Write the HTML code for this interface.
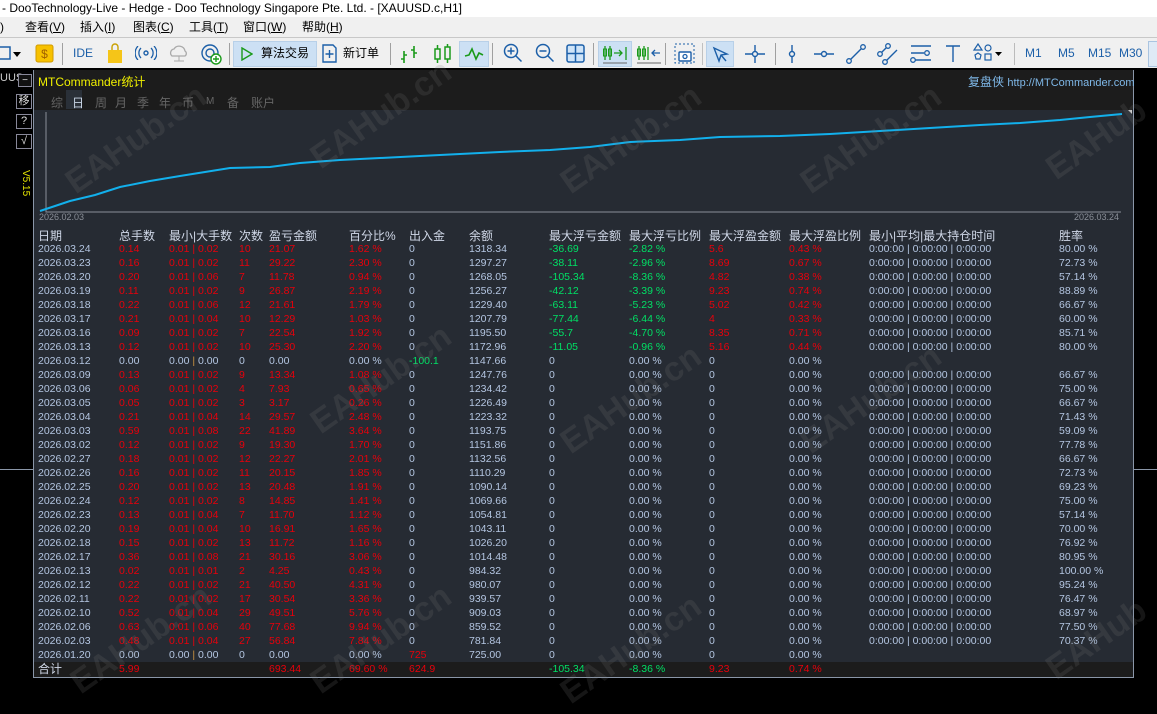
<!DOCTYPE html>
<html><head><meta charset="utf-8">
<style>
*{margin:0;padding:0;box-sizing:border-box}
body{width:1157px;height:714px;overflow:hidden;background:#000;font-family:"Liberation Sans","Noto Sans CJK SC",sans-serif;position:relative}
.abs{position:absolute}
#title{left:0;top:0;width:1157px;height:17px;background:#fff;font-size:12px;line-height:16px;color:#000;padding-left:2px;white-space:nowrap}
#menu{left:0;top:17px;width:1157px;height:20px;background:#f0f0f0;font-size:12px;line-height:20px;color:#000}
#menu span{position:absolute;top:0}
#tb{left:0;top:37px;width:1157px;height:31px;background:#f0f0f0;border-top:1px solid #c8c8c8}
.sep{position:absolute;top:5px;width:1px;height:22px;background:#a0a0a0}
.hl{position:absolute;top:3px;height:26px;background:#cce0f4;border:1px solid #b8d0e8}
.tbt{position:absolute;top:0;font-size:12px;line-height:31px;color:#000}
.tf{position:absolute;top:0;font-size:12px;line-height:31px;color:#1c5fa8}
#blackline{left:0;top:68px;width:1157px;height:2px;background:#000}
#panel{left:33px;top:70px;width:1101px;height:608px;background:#262b33;border-left:1px solid #8a96a8;border-right:1px solid #8a96a8;border-bottom:1px solid #8a96a8}
#ptop{left:34px;top:70px;width:1099px;height:40px;background:#1c1c1c}
.tab{position:absolute;top:94px;font-size:12px;color:#666}
.r{position:absolute;left:34px;width:1099px;height:14px;font-size:10.5px;line-height:14px;color:#b4c6e2;white-space:nowrap}
.r span{position:absolute;top:0}
.a{left:4px}.b{left:85px}.c{left:135px}.d{left:205px}.e{left:235px}.f{left:315px}.g{left:375px}.h{left:435px}.i{left:515px}.j{left:595px}.k{left:675px}.l{left:755px}.m{left:835px}.n{left:1025px}
.R{color:#e8000b}.G{color:#00e065}.s{color:#c89040}
.hd{font-size:12px;color:#d0d8e8}
.wm{position:absolute;font-size:34px;font-weight:bold;color:rgba(120,120,120,0.18);transform:rotate(-35deg);white-space:nowrap}
</style></head><body>
<div id="title" class="abs">- DooTechnology-Live - Hedge - Doo Technology Singapore Pte. Ltd. - [XAUUSD.c,H1]</div>
<div id="menu" class="abs">
<span style="left:0">)</span><span style="left:25px">查看(<u>V</u>)</span><span style="left:80px">插入(<u>I</u>)</span><span style="left:133px">图表(<u>C</u>)</span><span style="left:189px">工具(<u>T</u>)</span><span style="left:243px">窗口(<u>W</u>)</span><span style="left:302px">帮助(<u>H</u>)</span>
</div>
<div id="tb" class="abs">
<svg class="abs" style="left:0;top:6px" width="30" height="20"><rect x="-4" y="3" width="14" height="12" fill="none" stroke="#1c5fa8" stroke-width="1.5"/><path d="M13 8h8l-4 5z" fill="#000"/></svg>
<svg class="abs" style="left:35px;top:6px" width="20" height="20"><rect x="1" y="1" width="17" height="17" rx="2" fill="#f7c100" stroke="#d09a00"/><text x="9.5" y="14" font-size="12" text-anchor="middle" fill="#a06000" font-family="Liberation Sans">$</text></svg>
<div class="sep" style="left:62px"></div>
<div class="tf" style="left:73px">IDE</div>
<svg class="abs" style="left:106px;top:5px" width="18" height="21"><path d="M2 7h14v13H2z" fill="#f5c518"/><path d="M6 7V4a3 3 0 0 1 6 0v3" fill="none" stroke="#c9a000" stroke-width="1.4"/></svg>
<svg class="abs" style="left:135px;top:8px" width="22" height="14"><circle cx="11" cy="7" r="2" fill="none" stroke="#1c5fa8" stroke-width="1.4"/><path d="M6 2a7 7 0 0 0 0 10M16 2a7 7 0 0 1 0 10M3 0a10 10 0 0 0 0 14M19 0a10 10 0 0 1 0 14" fill="none" stroke="#1c5fa8" stroke-width="1.3"/></svg>
<svg class="abs" style="left:168px;top:6px" width="22" height="20"><path d="M4 12a4 4 0 0 1 2-7 6 6 0 0 1 11 2 3 3 0 0 1 0 5z" fill="none" stroke="#aaa" stroke-width="1.3"/><path d="M11 12v5M6 17h10" stroke="#aaa"/></svg>
<svg class="abs" style="left:200px;top:5px" width="24" height="22"><circle cx="10" cy="10" r="8" fill="none" stroke="#1c5fa8" stroke-width="1.4"/><circle cx="10" cy="10" r="4" fill="none" stroke="#1c5fa8" stroke-width="1.4"/><circle cx="16" cy="16" r="5" fill="#fff" stroke="#1a9a1a" stroke-width="1.4"/><path d="M16 13v6M13 16h6" stroke="#1a9a1a" stroke-width="1.4"/></svg>
<div class="sep" style="left:229px"></div>
<div class="hl" style="left:233px;width:84px"></div>
<svg class="abs" style="left:241px;top:9px" width="12" height="14"><path d="M1 1l10 6-10 6z" fill="none" stroke="#1a9a1a" stroke-width="1.4"/></svg>
<div class="tbt" style="left:261px">算法交易</div>
<svg class="abs" style="left:321px;top:6px" width="16" height="20"><path d="M2 1h10l3 3v14H2z" fill="none" stroke="#1c5fa8" stroke-width="1.4"/><path d="M8.5 6v8M4.5 10h8" stroke="#1c5fa8" stroke-width="1.4"/></svg>
<div class="tbt" style="left:343px">新订单</div>
<div class="sep" style="left:390px"></div>
<svg class="abs" style="left:400px;top:7px" width="20" height="18"><path d="M4 6v12M1 14h3M4 10h3M14 1v12M11 5h3M14 8h3" stroke="#1a9a1a" stroke-width="1.6" fill="none"/></svg>
<svg class="abs" style="left:433px;top:5px" width="20" height="22"><rect x="2" y="6" width="5" height="10" fill="none" stroke="#1a9a1a" stroke-width="1.5"/><rect x="12" y="4" width="5" height="12" fill="none" stroke="#1a9a1a" stroke-width="1.5"/><path d="M4.5 2v4M4.5 16v4M14.5 1v3M14.5 16v4" stroke="#1a9a1a" stroke-width="1.5"/></svg>
<div class="hl" style="left:459px;width:30px"></div>
<svg class="abs" style="left:464px;top:9px" width="20" height="14"><path d="M1 9l4-1 3-6 4 10 3-6 4 2" fill="none" stroke="#1a9a1a" stroke-width="1.6"/></svg>
<div class="sep" style="left:492px"></div>
<svg class="abs" style="left:503px;top:5px" width="20" height="22"><circle cx="8" cy="8" r="6.5" fill="none" stroke="#1c5fa8" stroke-width="1.5"/><path d="M12.5 12.5l6 6M8 4.5v7M4.5 8h7" stroke="#1c5fa8" stroke-width="1.5"/></svg>
<svg class="abs" style="left:535px;top:5px" width="20" height="22"><circle cx="8" cy="8" r="6.5" fill="none" stroke="#1c5fa8" stroke-width="1.5"/><path d="M12.5 12.5l6 6M4.5 8h7" stroke="#1c5fa8" stroke-width="1.5"/></svg>
<svg class="abs" style="left:566px;top:6px" width="20" height="20"><rect x="1" y="1" width="17" height="17" rx="2" fill="#cfe4f8" stroke="#1c5fa8" stroke-width="1.5"/><path d="M9.5 1v17M1 9.5h17" stroke="#1c5fa8" stroke-width="1.5"/></svg>
<div class="sep" style="left:593px"></div>
<div class="hl" style="left:598px;width:34px"></div>
<svg class="abs" style="left:602px;top:6px" width="28" height="20"><path d="M3 2v14M8 2v14" stroke="#1a9a1a" stroke-width="1.3"/><rect x="1.5" y="5" width="3" height="7" fill="none" stroke="#1a9a1a"/><rect x="6.5" y="5" width="3" height="7" fill="none" stroke="#1a9a1a"/><path d="M12 9h8M17 6l3 3-3 3M24 3v13" stroke="#1a9a1a" stroke-width="1.3" fill="none"/><path d="M1 19h24" stroke="#666"/></svg>
<svg class="abs" style="left:636px;top:6px" width="28" height="20"><path d="M3 2v14M8 2v14" stroke="#1a9a1a" stroke-width="1.3"/><rect x="1.5" y="5" width="3" height="7" fill="none" stroke="#1a9a1a"/><rect x="6.5" y="5" width="3" height="7" fill="none" stroke="#1a9a1a"/><path d="M12 3v13" stroke="#1a9a1a" stroke-width="1.3"/><path d="M24 9h-8M19 6l-3 3 3 3" stroke="#1c5fa8" stroke-width="1.3" fill="none"/><path d="M1 19h24" stroke="#666"/></svg>
<div class="sep" style="left:665px"></div>
<svg class="abs" style="left:674px;top:5px" width="22" height="22"><rect x="1" y="1" width="19" height="19" fill="none" stroke="#1c5fa8" stroke-dasharray="2 2"/><rect x="5" y="9" width="12" height="9" rx="1" fill="#fff" stroke="#1c5fa8" stroke-width="1.4"/><circle cx="11" cy="13.5" r="2" fill="none" stroke="#1c5fa8" stroke-width="1.3"/></svg>
<div class="sep" style="left:702px;background:#c0c0c0"></div>
<div class="hl" style="left:706px;width:28px"></div>
<svg class="abs" style="left:712px;top:8px" width="18" height="18"><path d="M2 2l13 6-6 1-2 6z" fill="none" stroke="#1c5fa8" stroke-width="1.4"/><path d="M9 9l5 6" stroke="#1c5fa8" stroke-width="1.4"/></svg>
<svg class="abs" style="left:744px;top:6px" width="22" height="20"><path d="M11 1v18M1 10h20" stroke="#1c5fa8" stroke-width="1.4"/><circle cx="11" cy="10" r="2.5" fill="#f0f0f0" stroke="#1c5fa8" stroke-width="1.4"/></svg>
<div class="sep" style="left:775px"></div>
<svg class="abs" style="left:786px;top:6px" width="12" height="20"><path d="M6 1v18" stroke="#1c5fa8" stroke-width="1.4"/><circle cx="6" cy="10" r="2.5" fill="#f0f0f0" stroke="#1c5fa8" stroke-width="1.4"/></svg>
<svg class="abs" style="left:813px;top:10px" width="22" height="12"><path d="M1 6h20" stroke="#1c5fa8" stroke-width="1.4"/><circle cx="11" cy="6" r="2.5" fill="#f0f0f0" stroke="#1c5fa8" stroke-width="1.4"/></svg>
<svg class="abs" style="left:845px;top:5px" width="22" height="22"><path d="M4 18L18 4" stroke="#1c5fa8" stroke-width="1.4"/><circle cx="4" cy="18" r="2.3" fill="#f0f0f0" stroke="#1c5fa8" stroke-width="1.3"/><circle cx="18" cy="4" r="2.3" fill="#f0f0f0" stroke="#1c5fa8" stroke-width="1.3"/></svg>
<svg class="abs" style="left:877px;top:5px" width="24" height="22"><path d="M3 11l8-8M8 19l12-12" stroke="#1c5fa8" stroke-width="1.4"/><circle cx="3" cy="11" r="2.3" fill="#f0f0f0" stroke="#1c5fa8" stroke-width="1.3"/><circle cx="11" cy="3" r="2.3" fill="#f0f0f0" stroke="#1c5fa8" stroke-width="1.3"/><circle cx="8" cy="19" r="2.3" fill="#f0f0f0" stroke="#1c5fa8" stroke-width="1.3"/></svg>
<svg class="abs" style="left:910px;top:6px" width="22" height="20"><path d="M1 2h20M1 9h13M1 16h20" stroke="#1c5fa8" stroke-width="1.4"/><circle cx="17" cy="9" r="2.3" fill="#f0f0f0" stroke="#1c5fa8" stroke-width="1.3"/><circle cx="3" cy="16" r="2.3" fill="#f0f0f0" stroke="#1c5fa8" stroke-width="1.3"/></svg>
<svg class="abs" style="left:945px;top:7px" width="16" height="18"><path d="M1 1h14M8 1v16" stroke="#1c5fa8" stroke-width="1.4"/></svg>
<svg class="abs" style="left:972px;top:5px" width="36" height="22"><path d="M6 1l4 6H2z" fill="none" stroke="#1c5fa8" stroke-width="1.2"/><circle cx="16" cy="5" r="3" fill="none" stroke="#1c5fa8" stroke-width="1.2"/><path d="M3 12l3-2 3 2-1 4H4z" fill="none" stroke="#1c5fa8" stroke-width="1.2"/><rect x="13" y="11" width="6" height="6" fill="none" stroke="#1c5fa8" stroke-width="1.2"/><path d="M23 9h7l-3.5 4z" fill="#000"/></svg>
<div class="sep" style="left:1014px;background:#bbb;width:1px"></div>
<div class="tf" style="left:1025px">M1</div><div class="tf" style="left:1058px">M5</div><div class="tf" style="left:1088px">M15</div><div class="tf" style="left:1119px">M30</div>
<div class="abs" style="left:1148px;top:3px;width:12px;height:26px;background:#dfeaf6;border:1px solid #aac4e0"></div>
</div>
<div id="blackline" class="abs"></div>

<!-- left strip -->
<div class="abs" style="left:0;top:72px;font-size:11px;color:#ccc">UUS</div>
<div class="abs" style="left:18px;top:74px;width:14px;height:13px;border:1px solid #889;background:#111;color:#ddd;font-size:10px;line-height:11px;text-align:center">−</div>
<div class="abs" style="left:16px;top:94px;width:16px;height:15px;border:1px solid #889;color:#ddd;font-size:11px;line-height:13px;text-align:center">移</div>
<div class="abs" style="left:16px;top:114px;width:16px;height:15px;border:1px solid #889;color:#ddd;font-size:11px;line-height:13px;text-align:center">?</div>
<div class="abs" style="left:16px;top:134px;width:16px;height:15px;border:1px solid #889;color:#ddd;font-size:11px;line-height:13px;text-align:center">√</div>
<div class="abs" style="left:15px;top:170px;font-size:10px;color:#e6e600;transform:rotate(90deg);transform-origin:left top;left:31px;white-space:nowrap">V5.15</div>
<div class="abs" style="left:0;top:469px;width:33px;height:1px;background:#8a96a8"></div>
<div class="abs" style="left:1134px;top:469px;width:23px;height:1px;background:#8a96a8"></div>

<div id="panel" class="abs"></div>
<div id="ptop" class="abs"></div>
<div class="abs" style="left:38px;top:73px;font-size:12px;color:#f0f000">MTCommander统计</div>
<div class="abs" style="left:968px;top:73px;font-size:12px;color:#7fb8e8">复盘侠 <span style="font-size:11px">http://MTCommander.com</span></div>
<div class="tab" style="left:51px">综</div>
<div class="abs" style="left:66px;top:90px;width:16px;height:19px;background:#2a3038"></div>
<div class="tab" style="left:72px;color:#c8d4e4">日</div>
<div class="tab" style="left:95px">周</div><div class="tab" style="left:115px">月</div><div class="tab" style="left:137px">季</div><div class="tab" style="left:159px">年</div><div class="tab" style="left:182px">币</div><div class="tab" style="left:206px;font-size:10px;top:96px">M</div><div class="tab" style="left:227px">备</div><div class="tab" style="left:251px">账户</div>

<svg class="abs" style="left:34px;top:110px" width="1099" height="115">
<path d="M12 2V102H1087" fill="none" stroke="#8a8f98" stroke-width="1"/>
<polyline fill="none" stroke="#12b0ec" stroke-width="2" points="6,101 36,91 61,85 86,77 116,71 146,66 171,62 196,58 236,57 266,53 306,50 346,48 386,46 426,44 466,42 516,40 556,37 596,32 646,30 686,27 746,26 796,24 846,21 896,18 946,15 986,13 1026,10 1056,7 1088,4"/>
<path d="M1094 0l4 -4v8z" fill="#ccc"/>
<text x="5" y="110" font-size="9" fill="#8a8f98" font-family="Liberation Sans">2026.02.03</text>
<text x="1040" y="110" font-size="9" fill="#8a8f98" font-family="Liberation Sans">2026.03.24</text>
</svg>

<div class="r hd" style="top:228px;height:16px;line-height:16px"><span class="a">日期</span><span class="b">总手数</span><span class="c">最小|大手数</span><span class="d">次数</span><span class="e">盈亏金额</span><span class="f">百分比%</span><span class="g">出入金</span><span class="h">余额</span><span class="i">最大浮亏金额</span><span class="j">最大浮亏比例</span><span class="k">最大浮盈金额</span><span class="l">最大浮盈比例</span><span class="m">最小|平均|最大持仓时间</span><span class="n">胜率</span></div>

<div class="r" style="top:242px"><span class="a">2026.03.24</span><span class="b R">0.14</span><span class="c R">0.01 | 0.02</span><span class="d R">10</span><span class="e R">21.07</span><span class="f R">1.62 %</span><span class="g">0</span><span class="h">1318.34</span><span class="i G">-36.69</span><span class="j G">-2.82 %</span><span class="k R">5.6</span><span class="l R">0.43 %</span><span class="m">0:00:00 | 0:00:00 | 0:00:00</span><span class="n">80.00 %</span></div>
<div class="r" style="top:256px"><span class="a">2026.03.23</span><span class="b R">0.16</span><span class="c R">0.01 | 0.02</span><span class="d R">11</span><span class="e R">29.22</span><span class="f R">2.30 %</span><span class="g">0</span><span class="h">1297.27</span><span class="i G">-38.11</span><span class="j G">-2.96 %</span><span class="k R">8.69</span><span class="l R">0.67 %</span><span class="m">0:00:00 | 0:00:00 | 0:00:00</span><span class="n">72.73 %</span></div>
<div class="r" style="top:270px"><span class="a">2026.03.20</span><span class="b R">0.20</span><span class="c R">0.01 | 0.06</span><span class="d R">7</span><span class="e R">11.78</span><span class="f R">0.94 %</span><span class="g">0</span><span class="h">1268.05</span><span class="i G">-105.34</span><span class="j G">-8.36 %</span><span class="k R">4.82</span><span class="l R">0.38 %</span><span class="m">0:00:00 | 0:00:00 | 0:00:00</span><span class="n">57.14 %</span></div>
<div class="r" style="top:284px"><span class="a">2026.03.19</span><span class="b R">0.11</span><span class="c R">0.01 | 0.02</span><span class="d R">9</span><span class="e R">26.87</span><span class="f R">2.19 %</span><span class="g">0</span><span class="h">1256.27</span><span class="i G">-42.12</span><span class="j G">-3.39 %</span><span class="k R">9.23</span><span class="l R">0.74 %</span><span class="m">0:00:00 | 0:00:00 | 0:00:00</span><span class="n">88.89 %</span></div>
<div class="r" style="top:298px"><span class="a">2026.03.18</span><span class="b R">0.22</span><span class="c R">0.01 | 0.06</span><span class="d R">12</span><span class="e R">21.61</span><span class="f R">1.79 %</span><span class="g">0</span><span class="h">1229.40</span><span class="i G">-63.11</span><span class="j G">-5.23 %</span><span class="k R">5.02</span><span class="l R">0.42 %</span><span class="m">0:00:00 | 0:00:00 | 0:00:00</span><span class="n">66.67 %</span></div>
<div class="r" style="top:312px"><span class="a">2026.03.17</span><span class="b R">0.21</span><span class="c R">0.01 | 0.04</span><span class="d R">10</span><span class="e R">12.29</span><span class="f R">1.03 %</span><span class="g">0</span><span class="h">1207.79</span><span class="i G">-77.44</span><span class="j G">-6.44 %</span><span class="k R">4</span><span class="l R">0.33 %</span><span class="m">0:00:00 | 0:00:00 | 0:00:00</span><span class="n">60.00 %</span></div>
<div class="r" style="top:326px"><span class="a">2026.03.16</span><span class="b R">0.09</span><span class="c R">0.01 | 0.02</span><span class="d R">7</span><span class="e R">22.54</span><span class="f R">1.92 %</span><span class="g">0</span><span class="h">1195.50</span><span class="i G">-55.7</span><span class="j G">-4.70 %</span><span class="k R">8.35</span><span class="l R">0.71 %</span><span class="m">0:00:00 | 0:00:00 | 0:00:00</span><span class="n">85.71 %</span></div>
<div class="r" style="top:340px"><span class="a">2026.03.13</span><span class="b R">0.12</span><span class="c R">0.01 | 0.02</span><span class="d R">10</span><span class="e R">25.30</span><span class="f R">2.20 %</span><span class="g">0</span><span class="h">1172.96</span><span class="i G">-11.05</span><span class="j G">-0.96 %</span><span class="k R">5.16</span><span class="l R">0.44 %</span><span class="m">0:00:00 | 0:00:00 | 0:00:00</span><span class="n">80.00 %</span></div>
<div class="r" style="top:354px"><span class="a">2026.03.12</span><span class="b">0.00</span><span class="c">0.00 <b class="s" style="font-weight:normal">|</b> 0.00</span><span class="d">0</span><span class="e">0.00</span><span class="f">0.00 %</span><span class="g G">-100.1</span><span class="h">1147.66</span><span class="i">0</span><span class="j">0.00 %</span><span class="k">0</span><span class="l">0.00 %</span></div>
<div class="r" style="top:368px"><span class="a">2026.03.09</span><span class="b R">0.13</span><span class="c R">0.01 | 0.02</span><span class="d R">9</span><span class="e R">13.34</span><span class="f R">1.08 %</span><span class="g">0</span><span class="h">1247.76</span><span class="i">0</span><span class="j">0.00 %</span><span class="k">0</span><span class="l">0.00 %</span><span class="m">0:00:00 | 0:00:00 | 0:00:00</span><span class="n">66.67 %</span></div>
<div class="r" style="top:382px"><span class="a">2026.03.06</span><span class="b R">0.06</span><span class="c R">0.01 | 0.02</span><span class="d R">4</span><span class="e R">7.93</span><span class="f R">0.65 %</span><span class="g">0</span><span class="h">1234.42</span><span class="i">0</span><span class="j">0.00 %</span><span class="k">0</span><span class="l">0.00 %</span><span class="m">0:00:00 | 0:00:00 | 0:00:00</span><span class="n">75.00 %</span></div>
<div class="r" style="top:396px"><span class="a">2026.03.05</span><span class="b R">0.05</span><span class="c R">0.01 | 0.02</span><span class="d R">3</span><span class="e R">3.17</span><span class="f R">0.26 %</span><span class="g">0</span><span class="h">1226.49</span><span class="i">0</span><span class="j">0.00 %</span><span class="k">0</span><span class="l">0.00 %</span><span class="m">0:00:00 | 0:00:00 | 0:00:00</span><span class="n">66.67 %</span></div>
<div class="r" style="top:410px"><span class="a">2026.03.04</span><span class="b R">0.21</span><span class="c R">0.01 | 0.04</span><span class="d R">14</span><span class="e R">29.57</span><span class="f R">2.48 %</span><span class="g">0</span><span class="h">1223.32</span><span class="i">0</span><span class="j">0.00 %</span><span class="k">0</span><span class="l">0.00 %</span><span class="m">0:00:00 | 0:00:00 | 0:00:00</span><span class="n">71.43 %</span></div>
<div class="r" style="top:424px"><span class="a">2026.03.03</span><span class="b R">0.59</span><span class="c R">0.01 | 0.08</span><span class="d R">22</span><span class="e R">41.89</span><span class="f R">3.64 %</span><span class="g">0</span><span class="h">1193.75</span><span class="i">0</span><span class="j">0.00 %</span><span class="k">0</span><span class="l">0.00 %</span><span class="m">0:00:00 | 0:00:00 | 0:00:00</span><span class="n">59.09 %</span></div>
<div class="r" style="top:438px"><span class="a">2026.03.02</span><span class="b R">0.12</span><span class="c R">0.01 | 0.02</span><span class="d R">9</span><span class="e R">19.30</span><span class="f R">1.70 %</span><span class="g">0</span><span class="h">1151.86</span><span class="i">0</span><span class="j">0.00 %</span><span class="k">0</span><span class="l">0.00 %</span><span class="m">0:00:00 | 0:00:00 | 0:00:00</span><span class="n">77.78 %</span></div>
<div class="r" style="top:452px"><span class="a">2026.02.27</span><span class="b R">0.18</span><span class="c R">0.01 | 0.02</span><span class="d R">12</span><span class="e R">22.27</span><span class="f R">2.01 %</span><span class="g">0</span><span class="h">1132.56</span><span class="i">0</span><span class="j">0.00 %</span><span class="k">0</span><span class="l">0.00 %</span><span class="m">0:00:00 | 0:00:00 | 0:00:00</span><span class="n">66.67 %</span></div>
<div class="r" style="top:466px"><span class="a">2026.02.26</span><span class="b R">0.16</span><span class="c R">0.01 | 0.02</span><span class="d R">11</span><span class="e R">20.15</span><span class="f R">1.85 %</span><span class="g">0</span><span class="h">1110.29</span><span class="i">0</span><span class="j">0.00 %</span><span class="k">0</span><span class="l">0.00 %</span><span class="m">0:00:00 | 0:00:00 | 0:00:00</span><span class="n">72.73 %</span></div>
<div class="r" style="top:480px"><span class="a">2026.02.25</span><span class="b R">0.20</span><span class="c R">0.01 | 0.02</span><span class="d R">13</span><span class="e R">20.48</span><span class="f R">1.91 %</span><span class="g">0</span><span class="h">1090.14</span><span class="i">0</span><span class="j">0.00 %</span><span class="k">0</span><span class="l">0.00 %</span><span class="m">0:00:00 | 0:00:00 | 0:00:00</span><span class="n">69.23 %</span></div>
<div class="r" style="top:494px"><span class="a">2026.02.24</span><span class="b R">0.12</span><span class="c R">0.01 | 0.02</span><span class="d R">8</span><span class="e R">14.85</span><span class="f R">1.41 %</span><span class="g">0</span><span class="h">1069.66</span><span class="i">0</span><span class="j">0.00 %</span><span class="k">0</span><span class="l">0.00 %</span><span class="m">0:00:00 | 0:00:00 | 0:00:00</span><span class="n">75.00 %</span></div>
<div class="r" style="top:508px"><span class="a">2026.02.23</span><span class="b R">0.13</span><span class="c R">0.01 | 0.04</span><span class="d R">7</span><span class="e R">11.70</span><span class="f R">1.12 %</span><span class="g">0</span><span class="h">1054.81</span><span class="i">0</span><span class="j">0.00 %</span><span class="k">0</span><span class="l">0.00 %</span><span class="m">0:00:00 | 0:00:00 | 0:00:00</span><span class="n">57.14 %</span></div>
<div class="r" style="top:522px"><span class="a">2026.02.20</span><span class="b R">0.19</span><span class="c R">0.01 | 0.04</span><span class="d R">10</span><span class="e R">16.91</span><span class="f R">1.65 %</span><span class="g">0</span><span class="h">1043.11</span><span class="i">0</span><span class="j">0.00 %</span><span class="k">0</span><span class="l">0.00 %</span><span class="m">0:00:00 | 0:00:00 | 0:00:00</span><span class="n">70.00 %</span></div>
<div class="r" style="top:536px"><span class="a">2026.02.18</span><span class="b R">0.15</span><span class="c R">0.01 | 0.02</span><span class="d R">13</span><span class="e R">11.72</span><span class="f R">1.16 %</span><span class="g">0</span><span class="h">1026.20</span><span class="i">0</span><span class="j">0.00 %</span><span class="k">0</span><span class="l">0.00 %</span><span class="m">0:00:00 | 0:00:00 | 0:00:00</span><span class="n">76.92 %</span></div>
<div class="r" style="top:550px"><span class="a">2026.02.17</span><span class="b R">0.36</span><span class="c R">0.01 | 0.08</span><span class="d R">21</span><span class="e R">30.16</span><span class="f R">3.06 %</span><span class="g">0</span><span class="h">1014.48</span><span class="i">0</span><span class="j">0.00 %</span><span class="k">0</span><span class="l">0.00 %</span><span class="m">0:00:00 | 0:00:00 | 0:00:00</span><span class="n">80.95 %</span></div>
<div class="r" style="top:564px"><span class="a">2026.02.13</span><span class="b R">0.02</span><span class="c R">0.01 | 0.01</span><span class="d R">2</span><span class="e R">4.25</span><span class="f R">0.43 %</span><span class="g">0</span><span class="h">984.32</span><span class="i">0</span><span class="j">0.00 %</span><span class="k">0</span><span class="l">0.00 %</span><span class="m">0:00:00 | 0:00:00 | 0:00:00</span><span class="n">100.00 %</span></div>
<div class="r" style="top:578px"><span class="a">2026.02.12</span><span class="b R">0.22</span><span class="c R">0.01 | 0.02</span><span class="d R">21</span><span class="e R">40.50</span><span class="f R">4.31 %</span><span class="g">0</span><span class="h">980.07</span><span class="i">0</span><span class="j">0.00 %</span><span class="k">0</span><span class="l">0.00 %</span><span class="m">0:00:00 | 0:00:00 | 0:00:00</span><span class="n">95.24 %</span></div>
<div class="r" style="top:592px"><span class="a">2026.02.11</span><span class="b R">0.22</span><span class="c R">0.01 | 0.02</span><span class="d R">17</span><span class="e R">30.54</span><span class="f R">3.36 %</span><span class="g">0</span><span class="h">939.57</span><span class="i">0</span><span class="j">0.00 %</span><span class="k">0</span><span class="l">0.00 %</span><span class="m">0:00:00 | 0:00:00 | 0:00:00</span><span class="n">76.47 %</span></div>
<div class="r" style="top:606px"><span class="a">2026.02.10</span><span class="b R">0.52</span><span class="c R">0.01 | 0.04</span><span class="d R">29</span><span class="e R">49.51</span><span class="f R">5.76 %</span><span class="g">0</span><span class="h">909.03</span><span class="i">0</span><span class="j">0.00 %</span><span class="k">0</span><span class="l">0.00 %</span><span class="m">0:00:00 | 0:00:00 | 0:00:00</span><span class="n">68.97 %</span></div>
<div class="r" style="top:620px"><span class="a">2026.02.06</span><span class="b R">0.63</span><span class="c R">0.01 | 0.06</span><span class="d R">40</span><span class="e R">77.68</span><span class="f R">9.94 %</span><span class="g">0</span><span class="h">859.52</span><span class="i">0</span><span class="j">0.00 %</span><span class="k">0</span><span class="l">0.00 %</span><span class="m">0:00:00 | 0:00:00 | 0:00:00</span><span class="n">77.50 %</span></div>
<div class="r" style="top:634px"><span class="a">2026.02.03</span><span class="b R">0.48</span><span class="c R">0.01 | 0.04</span><span class="d R">27</span><span class="e R">56.84</span><span class="f R">7.84 %</span><span class="g">0</span><span class="h">781.84</span><span class="i">0</span><span class="j">0.00 %</span><span class="k">0</span><span class="l">0.00 %</span><span class="m">0:00:00 | 0:00:00 | 0:00:00</span><span class="n">70.37 %</span></div>
<div class="r" style="top:648px"><span class="a">2026.01.20</span><span class="b">0.00</span><span class="c">0.00 <b class="s" style="font-weight:normal">|</b> 0.00</span><span class="d">0</span><span class="e">0.00</span><span class="f">0.00 %</span><span class="g R">725</span><span class="h">725.00</span><span class="i">0</span><span class="j">0.00 %</span><span class="k">0</span><span class="l">0.00 %</span></div>
<div class="r" style="top:662px;height:15px;background:#1c1c1c;line-height:15px"><span class="a" style="font-size:12px;color:#d0d8e8">合计</span><span class="b R">5.99</span><span class="e R">693.44</span><span class="f R">69.60 %</span><span class="g R">624.9</span><span class="i G">-105.34</span><span class="j G">-8.36 %</span><span class="k R">9.23</span><span class="l R">0.74 %</span></div>

<div class="wm" style="left:55px;top:120px">EAHub.cn</div>
<div class="wm" style="left:300px;top:95px">EAHub.cn</div>
<div class="wm" style="left:550px;top:120px">EAHub.cn</div>
<div class="wm" style="left:790px;top:120px">EAHub.cn</div>
<div class="wm" style="left:1040px;top:120px">EAHub</div>
<div class="wm" style="left:300px;top:360px">EAHub.cn</div>
<div class="wm" style="left:550px;top:380px">EAHub.cn</div>
<div class="wm" style="left:790px;top:380px">EAHub.cn</div>
<div class="wm" style="left:60px;top:620px">EAHub.cn</div>
<div class="wm" style="left:300px;top:620px">EAHub.cn</div>
<div class="wm" style="left:550px;top:630px">EAHub.cn</div>
<div class="wm" style="left:1040px;top:620px">EAHub</div>
</body></html>
